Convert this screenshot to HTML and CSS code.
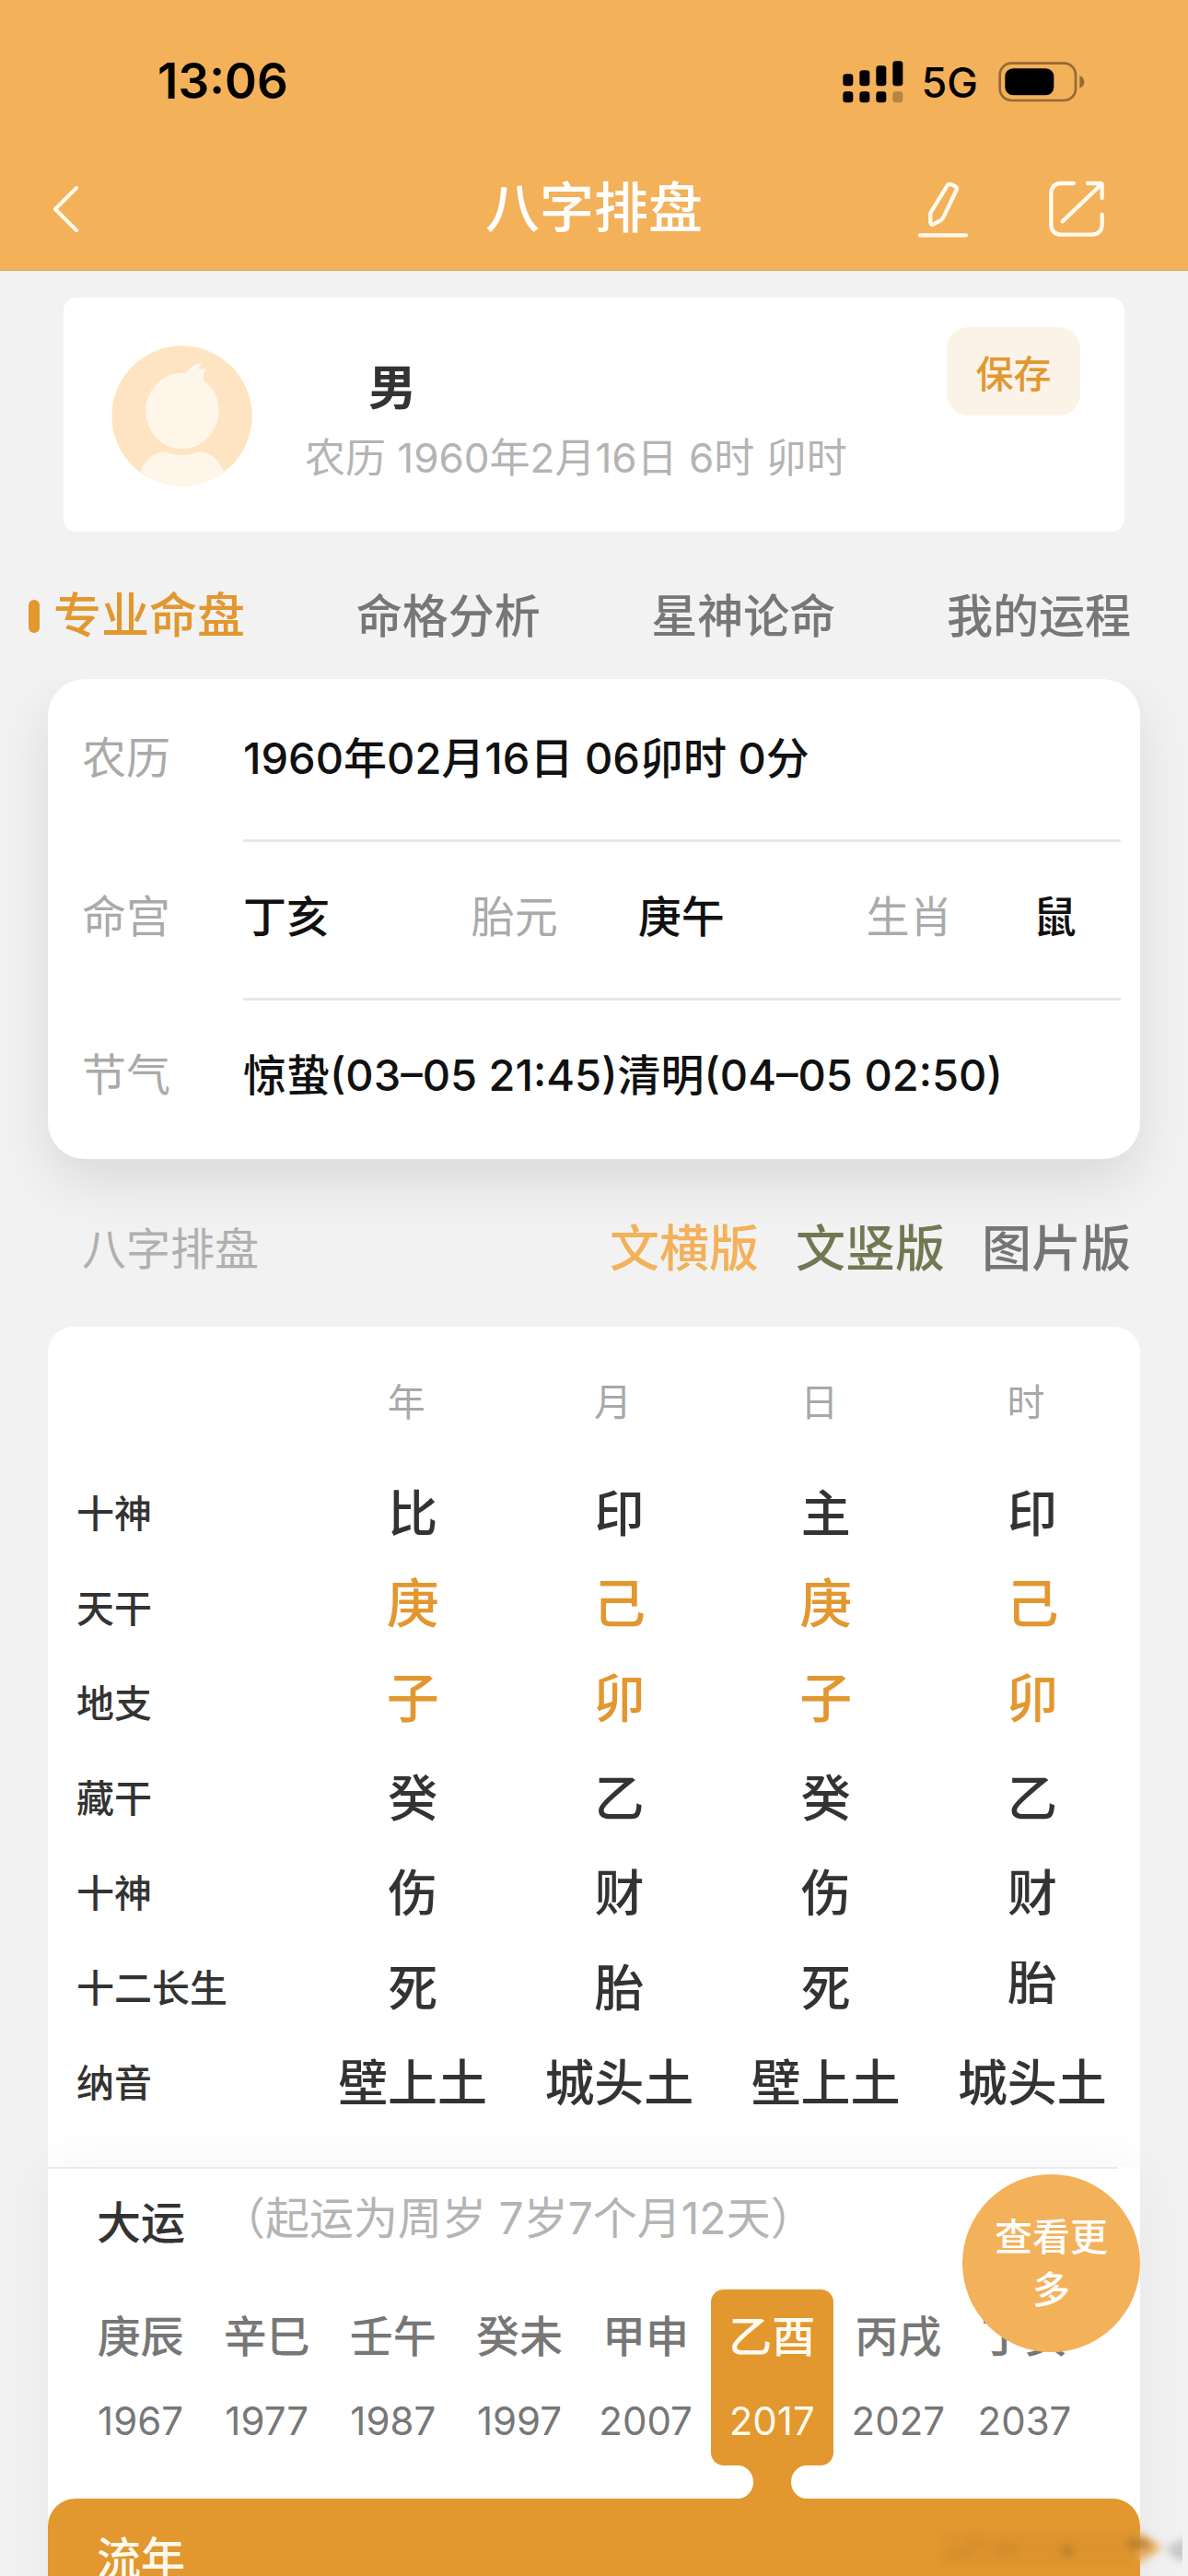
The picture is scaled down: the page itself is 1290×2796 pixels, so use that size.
FILE: index.html
```
<!DOCTYPE html>
<html lang="zh-CN">
<head>
	<meta charset="utf-8">
	<meta name="viewport" content="width=device-width, initial-scale=1">
	<title>八字排盘</title>
	<link rel="stylesheet" href="styles.css">
</head>
<body>
	<div class="page">
		<header class="header">
			<div class="status">
				<span class="status-time">13:06</span>
				<svg class="signal" viewBox="107 71 198 138" aria-hidden="true">
					<rect x="108" y="114" width="33" height="39" rx="10"/>
					<rect x="162" y="102" width="33" height="51" rx="10"/>
					<rect x="216" y="87" width="33" height="66" rx="10"/>
					<rect x="270" y="72" width="33" height="81" rx="10"/>
					<rect x="108" y="171" width="33" height="36" rx="10"/>
					<rect x="162" y="171" width="33" height="36" rx="10"/>
					<rect x="216" y="171" width="33" height="36" rx="10"/>
					<rect x="270" y="171" width="33" height="36" rx="10" opacity=".25"/>
				</svg>
				<span class="status-net">5G</span>
				<svg class="battery" viewBox="611 74 282 132" aria-hidden="true">
					<rect x="616" y="79" width="247" height="121" rx="38" fill="none" stroke="#956a35" stroke-width="8"/>
					<rect x="633" y="96" width="159" height="87" rx="26"/>
					<path d="M876 119q15 6 15 21t-15 20z" fill="#956a35"/>
				</svg>
			</div>
			<nav class="nav">
				<a href="#" class="back" aria-label="返回">
					<svg viewBox="0 0 28 50"><path d="M26 2L3 25L26 48"/></svg>
				</a>
				<h1>八字排盘</h1>
				<div class="nav-btns">
					<button type="button" aria-label="编辑">
						<svg class="ico-edit" viewBox="348 466 168 186"><path d="M446 482Q450 476 457 478L472 485Q479 489 476 496L434 584Q430 592 422 597L401 608Q392 611 391 602V577Q391 571 394 566ZM357 644H507"/></svg>
					</button>
					<button type="button" aria-label="分享">
						<svg class="ico-share" viewBox="774 468 186 186"><path d="M858 477H818Q784 477 784 512V610Q784 644 818 644H916Q950 644 950 610V579M903 477H944Q950 477 950 483V525M821 601L946 482"/></svg>
					</button>
				</div>
			</nav>
		</header>

		<section class="user">
			<svg class="avatar" viewBox="62 44 460 460" aria-hidden="true">
				<circle cx="292" cy="274" r="229" fill="#ffe4c4"/>
				<path fill="#fff6ea" d="M302 138Q322 106 356 100L346 122L372 118Q358 142 364 160Q412 195 412 255C412 325 360 381 293 381S174 325 174 255C174 190 230 130 302 134Z"/>
				<path fill="#fff6ea" d="M157 457Q178 396 235 391Q292 412 350 391Q406 396 429 456Q375 503 292 503Q212 503 157 457Z"/>
			</svg>
			<div class="user-text">
				<strong>男</strong>
				<p>农历 1960年2月16日 6时 卯时</p>
			</div>
			<button type="button" class="save">保存</button>
		</section>

		<nav class="tabs">
			<a href="#" class="on">专业命盘</a>
			<a href="#">命格分析</a>
			<a href="#">星神论命</a>
			<a href="#">我的运程</a>
		</nav>

		<section class="info">
			<div class="info-row">
				<span class="info-label">农历</span>
				<div class="info-body"><b>1960年02月16日 06卯时 0分</b></div>
			</div>
			<div class="info-row">
				<span class="info-label">命宫</span>
				<div class="info-body info-cols"><b>丁亥</b><span>胎元</span><b>庚午</b><span>生肖</span><b>鼠</b></div>
			</div>
			<div class="info-row">
				<span class="info-label">节气</span>
				<div class="info-body"><b>惊蛰(03–05 21:45)清明(04–05 02:50)</b></div>
			</div>
		</section>

		<div class="bar">
			<h2>八字排盘</h2>
			<a href="#" class="heng">文横版</a>
			<a href="#" class="shu">文竖版</a>
			<a href="#">图片版</a>
		</div>

		<section class="pan">
			<table>
				<thead>
					<tr><td></td><th>年</th><th>月</th><th>日</th><th>时</th></tr>
				</thead>
				<tbody>
					<tr><th>十神</th><td>比</td><td>印</td><td>主</td><td>印</td></tr>
					<tr class="gz"><th>天干</th><td>庚</td><td>己</td><td>庚</td><td>己</td></tr>
					<tr class="gz"><th>地支</th><td>子</td><td>卯</td><td>子</td><td>卯</td></tr>
					<tr><th>藏干</th><td>癸</td><td>乙</td><td>癸</td><td>乙</td></tr>
					<tr><th>十神</th><td>伤</td><td>财</td><td>伤</td><td>财</td></tr>
					<tr><th>十二长生</th><td>死</td><td>胎</td><td>死</td><td><span class="cut">胎</span></td></tr>
					<tr><th>纳音</th><td>壁上土</td><td>城头土</td><td>壁上土</td><td>城头土</td></tr>
				</tbody>
			</table>
		</section>

		<section class="yun">
			<div class="yun-title">
				<h2>大运</h2>
				<p>（起运为周岁 7岁7个月12天）</p>
			</div>
			<ul class="yun-list">
				<li><span>庚辰</span><em>1967</em></li>
				<li><span>辛巳</span><em>1977</em></li>
				<li><span>壬午</span><em>1987</em></li>
				<li><span>癸未</span><em>1997</em></li>
				<li><span>甲申</span><em>2007</em></li>
				<li class="on">
					<span>乙酉</span><em>2017</em>
					<svg class="neck" viewBox="0 0 75 36" aria-hidden="true"><path d="M0 0A17 18 0 0 1 0 36H75A17 18 0 0 1 75 0Z"/></svg>
				</li>
				<li><span>丙戌</span><em>2027</em></li>
				<li><span>丁亥</span><em>2037</em></li>
			</ul>
			<button type="button" class="more">查看更多</button>
			<div class="liunian">
				<h2>流年</h2>
				<svg class="smudge" viewBox="0 0 270 50" aria-hidden="true">
					<g class="blur">
						<rect x="8" y="8" width="214" height="34" fill="#d9912d" opacity=".5"/>
						<ellipse cx="28" cy="32" rx="16" ry="6" fill="#c98729" opacity=".5"/>
						<ellipse cx="46" cy="20" rx="12" ry="6" fill="#c98729" opacity=".4"/>
						<ellipse cx="78" cy="26" rx="15" ry="8" fill="#c98729" opacity=".5"/>
						<ellipse cx="145" cy="28" rx="7" ry="8" fill="#b57a28" opacity=".7"/>
						<path d="M222 6L248 24L222 42Z" fill="#e8ac5f"/>
						<ellipse cx="222" cy="20" rx="13" ry="6" fill="#b0762a" opacity=".8"/>
						<path d="M252 24L276 12V38Q262 42 252 24Z" fill="#c8c8c8"/>
					</g>
				</svg>
			</div>
		</section>
	</div>
</body>
</html>
```

FILE: styles.css
```
*{margin: 0; padding: 0; box-sizing: border-box;}
body{
	background: #f2f2f2;
	color: #333;
	font-family: Inter, "Noto Sans CJK SC", sans-serif;
	font-size: 48px;
	line-height: 1;
}
a{
	color: inherit;
	text-decoration: none;
}
button{
	border: 0;
	background: none;
	font-family: inherit;
	cursor: pointer;
}
svg{
	display: block;
}
.page{
	height: 100vh;
	overflow-x: hidden;
	overflow-y: auto;
	scrollbar-width: none;
}

/* 顶部 */
.header{
	background: #f3b15a;
	border-bottom: solid 1px #d9ab6c;
}
.status{
	display: flex;
	align-items: center;
	height: 161px;
	padding: 16px 112px 0 171px;
	color: #000;
}
.status-time{
	margin-right: auto;
	font-size: 53px;
	font-weight: 600;
}
.status-net{
	margin: 2px 22px 0 20px;
	font-size: 45px;
	font-weight: 500;
}
.signal{
	width: 66px;
	height: 46px;
}
.battery{
	width: 94px;
	height: 44px;
}
.nav{
	display: grid;
	grid-template-columns: 1fr auto 1fr;
	align-items: center;
	height: 132px;
}
.nav svg{
	fill: none;
	stroke: #fffaee;
	stroke-width: 13;
	stroke-linecap: round;
	stroke-linejoin: round;
}
.nav .back svg{
	width: 28px;
	height: 50px;
	margin-left: 57px;
	stroke-width: 4;
}
.nav h1{
	padding-bottom: 4px;
	color: #fff;
	font-size: 59px;
	font-weight: 500;
}
.nav-btns{
	display: flex;
	justify-content: flex-end;
	gap: 86px;
	padding-right: 90px;
}
.ico-edit{
	width: 56px;
	height: 62px;
}
.ico-share{
	width: 62px;
	height: 62px;
}

/* 用户卡片 */
.user{
	display: flex;
	align-items: flex-start;
	height: 254px;
	margin: 29px 69px 0;
	padding: 32px 48px 0 52px;
	background: #fff;
	border-radius: 14px;
}
.avatar{
	width: 153px;
	height: 153px;
	margin-top: 20px;
}
.user-text{
	flex: 1;
	padding: 41px 0 0 57px;
}
.user-text strong{
	display: block;
	padding-left: 69px;
	font-size: 52px;
	font-weight: 700;
}
.user-text p{
	padding-top: 27px;
	color: #b4b4b4;
	font-size: 44px;
	white-space: nowrap;
}
.save{
	width: 145px;
	height: 96px;
	background: #fbf2e8;
	border-radius: 24px;
	color: #e0982f;
	font-size: 41px;
	font-weight: 500;
}

/* 标签 */
.tabs{
	position: relative;
	z-index: 1;
	display: flex;
	justify-content: space-between;
	align-items: center;
	height: 160px;
	padding: 24px 62px 0 31px;
	background: #f2f2f2;
	color: #777;
	font-size: 50px;
	font-weight: 500;
}
.tabs .on{
	display: flex;
	align-items: center;
	gap: 15px;
	color: #e2972f;
	font-size: 52px;
}
.tabs .on:before{
	content: "";
	width: 12px;
	height: 36px;
	background: #e2972f;
	border-radius: 6px;
}

/* 基本信息 */
.info{
	margin: 0 52px;
	padding: 5px 21px 0 37px;
	background: #fff;
	border-radius: 40px;
	box-shadow: 0 24px 60px rgba(0,0,0,.1);
}
.info-row{
	display: flex;
	height: 172px;
	color: #aaa;
	line-height: 161px;
}
.info-label{
	width: 175px;
}
.info-body{
	flex: 1;
	border-bottom: solid 3px #e8e8e8;
	font-size: 47px;
	white-space: nowrap;
}
.info-row:last-child .info-body{
	border: 0;
}
.info-body b{
	color: #111;
	font-weight: 500;
}
.info-cols{
	display: grid;
	grid-template-columns: 26% 19% 26% 19% 10%;
}

.bar{
	display: flex;
	align-items: center;
	gap: 40px;
	height: 182px;
	padding: 14px 62px 0 89px;
	color: #757575;
	font-size: 54px;
	font-weight: 500;
}
.bar h2{
	margin-right: auto;
	color: #b0b0b0;
	font-size: 48px;
	font-weight: 400;
}
.bar .heng{
	color: #f3b15a;
}
.bar .shu{
	color: #737752;
}

/* 排盘表格 */
.pan{
	margin: 0 52px;
	padding: 0 5px 39px 31px;
	background: #fff;
	border-radius: 28px 28px 0 0;
}
.pan table{
	width: 100%;
	border-collapse: collapse;
	table-layout: fixed;
}
.pan tr{
	height: 103px;
}
.pan thead tr{
	height: 152px;
}
.pan thead td{
	width: 22%;
}
.pan thead th{
	padding: 12px 14px 0 0;
	color: #a8a8a8;
	font-size: 41px;
	font-weight: 400;
}
.pan tbody th{
	font-size: 41px;
	font-weight: 500;
	text-align: left;
}
.pan tbody td{
	font-size: 54px;
	font-weight: 500;
	text-align: center;
}
.pan tbody .gz td{
	padding-bottom: 12px;
	color: #e2972f;
	font-size: 57px;
}
.cut{
	display: block;
	height: 46px;
	margin-bottom: 14px;
	line-height: 46px;
	overflow: hidden;
}

/* 大运 */
.yun{
	position: relative;
	margin: 0 52px;
	background: #fff;
	box-shadow: 0 0 60px rgba(0,0,0,.05);
}
.yun-title{
	display: flex;
	height: 133px;
	margin-right: 24px;
	padding: 30px 0 0 53px;
	border-top: solid 2px #ebebeb;
}
.yun-title h2{
	padding-top: 5px;
	font-size: 48px;
	font-weight: 500;
}
.yun-title p{
	padding-left: 39px;
	color: #b4b4b4;
}
.yun-list{
	display: grid;
	grid-template-columns: repeat(8, 1fr);
	padding: 0 55px 36px 34px;
	list-style: none;
}
.yun-list li{
	position: relative;
	height: 191px;
	margin-right: 4px;
	padding-top: 27px;
	border-radius: 14px;
	color: #777;
	text-align: center;
}
.yun-list span, .yun-list em{
	display: block;
	height: 48px;
	line-height: 48px;
}
.yun-list span{
	font-size: 47px;
	font-weight: 500;
}
.yun-list em{
	margin-top: 44px;
	font-size: 42px;
	font-style: normal;
}
.yun-list .on{
	background: #e2972f;
	color: #fffaee;
}
.neck{
	position: absolute;
	top: 100%;
	left: 50%;
	width: 75px;
	height: 36px;
	margin-left: -37px;
	fill: #e2972f;
}
.more{
	position: absolute;
	top: 8px;
	right: 0;
	width: 193px;
	height: 193px;
	padding: 0 30px;
	background: #f3b15a;
	border-radius: 50%;
	color: #fff;
	font-size: 41px;
	font-weight: 500;
	line-height: 57px;
}
.liunian{
	position: relative;
	height: 240px;
	padding: 41px 53px 0;
	background: #e2972f;
	border-radius: 30px 30px 0 0;
	color: #fffaee;
}
.liunian h2{
	font-size: 48px;
	font-weight: 500;
}
.smudge{
	position: absolute;
	top: 29px;
	right: -46px;
	width: 270px;
	height: 50px;
}
.smudge .blur{
	filter: blur(4px);
}
```
